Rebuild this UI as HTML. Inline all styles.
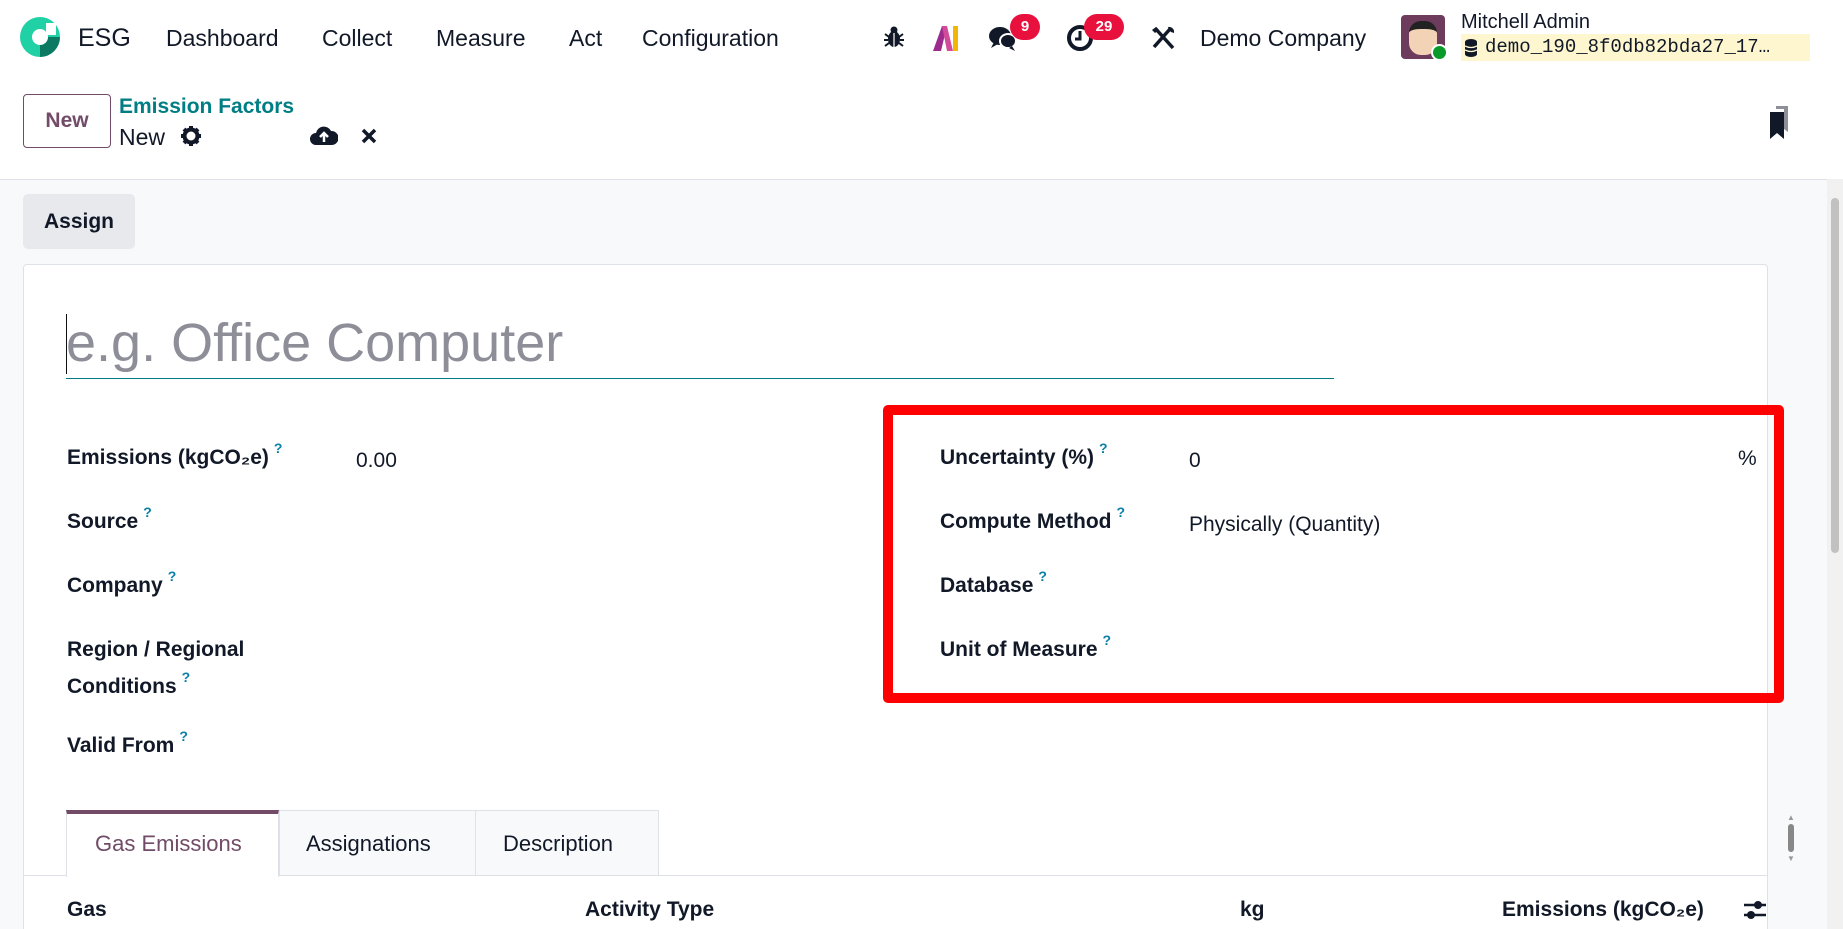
<!DOCTYPE html>
<html><head><meta charset="utf-8"><style>
*{box-sizing:border-box;margin:0;padding:0}
html,body{width:1843px;height:929px;overflow:hidden}
body{font-family:"Liberation Sans",sans-serif;color:#111827;background:#fff;position:relative}
.a{position:absolute;white-space:nowrap}
.nav{font-size:23px;top:25px}
.lbl{font-size:21px;font-weight:bold;color:#111827}
.q{color:#0a7fa8;font-size:14px;font-weight:bold;vertical-align:top;margin-left:5px;position:relative;top:-6px}
.val{font-size:21px}
</style></head><body>
<svg class="a" style="left:18px;top:15px" width="44" height="44" viewBox="0 0 44 44"><circle cx="22" cy="22" r="20" fill="#1fd1a5"/><path d="M22 42A20 20 0 0 0 42 22L30 22A8 8 0 0 1 22 30Z" fill="#0c7a63"/><circle cx="22" cy="22" r="8" fill="#fff"/><rect x="28" y="8" width="10" height="12" fill="#fff"/></svg>
<div class="a nav" style="left:78px;font-size:25px;top:24px">ESG</div>
<div class="a nav" style="left:166px">Dashboard</div>
<div class="a nav" style="left:322px">Collect</div>
<div class="a nav" style="left:436px">Measure</div>
<div class="a nav" style="left:569px">Act</div>
<div class="a nav" style="left:642px">Configuration</div>
<svg class="a" style="left:884px;top:26px" width="20" height="22" viewBox="0 0 20 22"><ellipse cx="10" cy="13" rx="6" ry="8" fill="#111827"/><circle cx="10" cy="4" r="3.5" fill="#111827"/><path d="M1 8l4 3M19 8l-4 3M0 14h4M20 14h-4M1 20l4-3M19 20l-4-3" stroke="#111827" stroke-width="2"/><line x1="10" y1="7" x2="10" y2="21" stroke="#fff" stroke-width="1.2"/></svg>
<svg class="a" style="left:931px;top:24px" width="30" height="28" viewBox="0 0 30 28"><path d="M2 27L11 2h5L10 27Z" fill="#9b2c8e"/><path d="M11 2h5l6 25h-6Z" fill="#d24b9a"/><rect x="22" y="2" width="5" height="25" fill="#f2b705"/></svg>
<svg class="a" style="left:988px;top:24px" width="30" height="28" viewBox="0 0 30 28"><ellipse cx="12" cy="12" rx="11" ry="9" fill="#111827"/><path d="M6 18l-3 6 7-4Z" fill="#111827"/><ellipse cx="20" cy="17" rx="8" ry="7" fill="#111827" stroke="#fff" stroke-width="2"/><path d="M24 22l3 5-6-3Z" fill="#111827"/></svg>
<div class="a" style="left:1010px;top:14px;width:30px;height:26px;border-radius:13px;background:#e8113e;color:#fff;font-size:15px;font-weight:bold;text-align:center;line-height:26px">9</div>
<svg class="a" style="left:1066px;top:24px" width="28" height="28" viewBox="0 0 28 28"><circle cx="14" cy="14" r="11" fill="none" stroke="#111827" stroke-width="4"/><path d="M14 7v8h-5" fill="none" stroke="#111827" stroke-width="3"/></svg>
<div class="a" style="left:1084px;top:14px;width:40px;height:26px;border-radius:13px;background:#e8113e;color:#fff;font-size:15px;font-weight:bold;text-align:center;line-height:26px">29</div>
<svg class="a" style="left:1150px;top:25px" width="26" height="26" viewBox="0 0 26 26"><path d="M5 3l18 20M20 4L4 22" stroke="#111827" stroke-width="3.5"/><path d="M2 5l4-3 3 3-4 3Z" fill="#111827"/><path d="M18 2a5 5 0 0 1 6 6l-3-1-2-2Z" fill="#111827"/></svg>
<div class="a nav" style="left:1200px">Demo Company</div>
<div class="a" style="left:1401px;top:15px;width:44px;height:44px;border-radius:4px;background:#6d3c5c"><div style="position:absolute;left:8px;top:6px;width:28px;height:34px;border-radius:12px;background:#f3d3b5;border-top:8px solid #222"></div></div>
<div class="a" style="left:1431px;top:44px;width:17px;height:17px;border-radius:50%;background:#0a9a2a;border:2px solid #fff"></div>
<div class="a" style="left:1461px;top:11px;font-size:20px">Mitchell Admin</div>
<div class="a" style="left:1461px;top:34px;width:349px;height:27px;background:#fdf6cf;font-family:'Liberation Mono',monospace;font-size:19px;line-height:27px;padding-left:24px">demo_190_8f0db82bda27_17…</div>
<svg class="a" style="left:1464px;top:39px" width="14" height="18" viewBox="0 0 14 18"><ellipse cx="7" cy="3" rx="6" ry="3" fill="#111827"/><rect x="1" y="3" width="12" height="12" fill="#111827"/><ellipse cx="7" cy="15" rx="6" ry="3" fill="#111827"/><path d="M1 7q6 3 12 0M1 11q6 3 12 0" stroke="#fdf6cf" stroke-width="1.3" fill="none"/></svg>
<div class="a" style="left:23px;top:94px;width:88px;height:54px;border:1px solid #714b67;border-radius:4px;color:#714b67;font-size:21px;font-weight:bold;text-align:center;line-height:52px">New</div>
<div class="a" style="left:119px;top:95px;font-size:21px;font-weight:bold;color:#017e84">Emission Factors</div>
<div class="a" style="left:119px;top:124px;font-size:23px">New</div>
<svg class="a" style="left:181px;top:126px" width="20" height="20" viewBox="0 0 20 20"><circle cx="10" cy="10" r="6.5" fill="none" stroke="#111827" stroke-width="4"/><g stroke="#111827" stroke-width="4"><path d="M10 0v5M10 15v5M0 10h5M15 10h5M3 3l3 3M14 14l3 3M17 3l-3 3M3 17l3-3"/></g></svg>
<svg class="a" style="left:310px;top:124px" width="28" height="22" viewBox="0 0 28 22"><path d="M6 21a6 6 0 0 1 0-12 8 8 0 0 1 15-2 6 6 0 0 1 1 14Z" fill="#111827"/><path d="M14 18v-8M10 13l4-4 4 4" stroke="#fff" stroke-width="2.5" fill="none"/></svg>
<svg class="a" style="left:361px;top:128px" width="16" height="16" viewBox="0 0 16 16"><path d="M2 2l12 12M14 2L2 14" stroke="#111827" stroke-width="3.5"/></svg>
<svg class="a" style="left:1768px;top:106px" width="24" height="34" viewBox="0 0 24 34"><path d="M8 0h12v26l-4-3V3H8Z" fill="#8f8f99"/><path d="M2 6h14v27l-7-6-7 6Z" fill="#111827"/></svg>
<div class="a" style="left:0;top:179px;width:1843px;height:750px;background:#f8f9fa;border-top:1px solid #dee2e6"></div>
<div class="a" style="left:1827px;top:179px;width:16px;height:750px;background:#f1f1f1"></div>
<div class="a" style="left:1831px;top:198px;width:8px;height:355px;background:#c1c1c1;border-radius:4px"></div>
<div class="a" style="left:23px;top:194px;width:112px;height:55px;background:#e7e9ed;border-radius:5px;font-size:21px;font-weight:bold;text-align:center;line-height:55px">Assign</div>
<div class="a" style="left:23px;top:264px;width:1745px;height:665px;background:#fff;border:1px solid #dee2e6;border-bottom:none;border-radius:4px 4px 0 0"></div>
<div class="a" style="left:66px;top:314px;width:1px;height:60px;background:#111"></div>
<div class="a" style="left:66px;top:312px;font-size:54px;color:#8e8e99">e.g. Office Computer</div>
<div class="a" style="left:66px;top:378px;width:1268px;height:1px;background:#017e84"></div>
<div class="a lbl" style="left:67px;top:446px">Emissions (kgCO₂e)<span class="q">?</span></div>
<div class="a val" style="left:356px;top:449px">0.00</div>
<div class="a lbl" style="left:67px;top:510px">Source<span class="q">?</span></div>
<div class="a lbl" style="left:67px;top:574px">Company<span class="q">?</span></div>
<div class="a lbl" style="left:67px;top:638px">Region / Regional</div>
<div class="a lbl" style="left:67px;top:675px">Conditions<span class="q">?</span></div>
<div class="a lbl" style="left:67px;top:734px">Valid From<span class="q">?</span></div>
<div class="a" style="left:883px;top:405px;width:901px;height:298px;border:10px solid #ff0000;border-radius:5px"></div>
<div class="a lbl" style="left:940px;top:446px">Uncertainty (%)<span class="q">?</span></div>
<div class="a val" style="left:1189px;top:449px">0</div>
<div class="a val" style="left:1738px;top:447px">%</div>
<div class="a lbl" style="left:940px;top:510px">Compute Method<span class="q">?</span></div>
<div class="a val" style="left:1189px;top:513px">Physically (Quantity)</div>
<div class="a lbl" style="left:940px;top:574px">Database<span class="q">?</span></div>
<div class="a lbl" style="left:940px;top:638px">Unit of Measure<span class="q">?</span></div>
<div class="a" style="left:24px;top:875px;width:1743px;height:1px;background:#dee2e6"></div>
<div class="a" style="left:279px;top:810px;width:380px;height:66px;background:#f8f9fa;border:1px solid #dee2e6"></div>
<div class="a" style="left:475px;top:810px;width:1px;height:66px;background:#dee2e6"></div>
<div class="a" style="left:66px;top:810px;width:213px;height:67px;background:#fff;border-top:4px solid #714b67;border-right:1px solid #dee2e6;border-left:1px solid #dee2e6"></div>
<div class="a" style="left:95px;top:831px;font-size:22px;color:#714b67">Gas Emissions</div>
<div class="a" style="left:306px;top:831px;font-size:22px">Assignations</div>
<div class="a" style="left:503px;top:831px;font-size:22px">Description</div>
<div class="a" style="left:1785px;top:813px;width:12px;height:58px"><div style="font-size:8px;color:#999;text-align:center">▲</div><div style="width:6px;height:28px;margin:2px auto;background:#888;border-radius:3px"></div><div style="font-size:8px;color:#999;text-align:center">▼</div></div>
<div class="a lbl" style="left:67px;top:898px">Gas</div>
<div class="a lbl" style="left:585px;top:898px">Activity Type</div>
<div class="a lbl" style="left:1240px;top:898px">kg</div>
<div class="a lbl" style="left:1502px;top:898px">Emissions (kgCO₂e)</div>
<svg class="a" style="left:1742px;top:898px" width="26" height="24" viewBox="0 0 26 24"><path d="M2 7h22M2 17h22" stroke="#111827" stroke-width="2.5"/><circle cx="16" cy="7" r="4" fill="#111827"/><circle cx="9" cy="17" r="4" fill="#111827"/></svg>
</body></html>
